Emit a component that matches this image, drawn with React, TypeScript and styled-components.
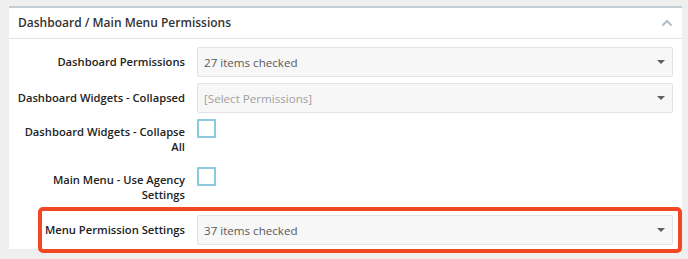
import React from "react";
import styled, { createGlobalStyle } from "styled-components";

const Global = createGlobalStyle`
  html, body { margin: 0; padding: 0; background: #efefef; }
  body { font-family: "Open Sans", "Liberation Sans", sans-serif; }
  * { box-sizing: border-box; }
`;

const Page = styled.div`
  padding: 6px 6px 0 9px;
  height: 259px;
  overflow: hidden;
`;

const Panel = styled.section`
  background: #fff;
  border-top: 2px solid #c3cdd4;
`;

const Header = styled.header`
  display: flex;
  align-items: center;
  justify-content: space-between;
  height: 31px;
  padding: 0 9px 1px 9px;
  border-bottom: 1px solid #dfe5e9;
`;

const Title = styled.h2`
  margin: 0;
  font-size: 12px;
  font-weight: 600;
  color: #333;
`;

const Body = styled.div`
  display: flex;
  flex-direction: column;
  gap: 6px;
  padding: 8px 9px 0 0;
`;

const Row = styled.div<{ $highlight?: boolean }>`
  display: grid;
  grid-template-columns: ${(p) => (p.$highlight ? "143px" : "176px")} 1fr;
  column-gap: 12px;
  align-items: start;
  ${(p) =>
    p.$highlight &&
    `
    margin: -8px -9px -4px 29px;
    padding: 4px 5px 4px 0;
    border: 4px solid #f24723;
    border-radius: 5px;
  `}
`;

const Label = styled.label<{ $check?: boolean }>`
  text-align: right;
  font-size: 11.2px;
  font-weight: 600;
  line-height: 15px;
  color: #222;
  padding: ${(p) => (p.$check ? "5px 0 7px" : "7px 0 3px")};
  white-space: nowrap;
`;

const Select = styled.div<{ $placeholder?: boolean }>`
  display: flex;
  align-items: center;
  justify-content: space-between;
  height: 30px;
  padding: 0 7px 0 6px;
  background: #f7f7f7;
  border: 1px solid #e1e3e4;
  border-radius: 2px;
  font-size: 11.6px;
  color: ${(p) => (p.$placeholder ? "#a0a0a0" : "#5a5a5a")};
`;

const Caret = styled.span`
  width: 0;
  height: 0;
  border-left: 4px solid transparent;
  border-right: 4px solid transparent;
  border-top: 4px solid #5f5f5f;
`;

const Checkbox = styled.span`
  display: block;
  width: 19px;
  height: 19px;
  border: 2px solid #8ac9de;
  border-radius: 1px;
  background: #fff;
`;

const Chevron = () => (
  <svg width="12" height="8" viewBox="0 0 12 8">
    <path d="M1.5 6.5 L6 2 L10.5 6.5" fill="none" stroke="#b3bec6" strokeWidth="2" />
  </svg>
);

const SelectField = ({ text, placeholder }: { text: string; placeholder?: boolean }) => (
  <Select $placeholder={placeholder}>
    <span>{text}</span>
    <Caret />
  </Select>
);

export default function App() {
  return (
    <>
      <Global />
      <Page>
        <Panel>
          <Header>
            <Title>Dashboard / Main Menu Permissions</Title>
            <Chevron />
          </Header>
          <Body>
            <Row>
              <Label>Dashboard Permissions</Label>
              <SelectField text="27 items checked" />
            </Row>
            <Row>
              <Label>Dashboard Widgets - Collapsed</Label>
              <SelectField text="[Select Permissions]" placeholder />
            </Row>
            <Row>
              <Label $check>
                Dashboard Widgets - Collapse
                <br />
                All
              </Label>
              <Checkbox />
            </Row>
            <Row>
              <Label $check>
                Main Menu - Use Agency
                <br />
                Settings
              </Label>
              <Checkbox />
            </Row>
            <Row $highlight>
              <Label>Menu Permission Settings</Label>
              <SelectField text="37 items checked" />
            </Row>
          </Body>
        </Panel>
      </Page>
    </>
  );
}
